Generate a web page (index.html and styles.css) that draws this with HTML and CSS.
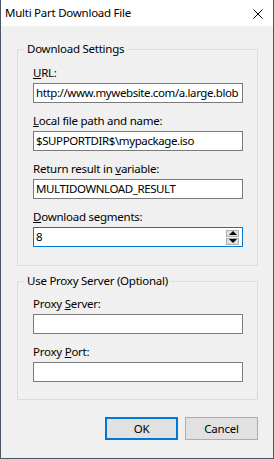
FILE: index.html
```html
<!DOCTYPE html>
<html lang="en">
	<head>
		<meta charset="UTF-8" />
		<title>Multi Part Download File</title>
		<link rel="stylesheet" href="styles.css">
	</head>
	<body>
		<div class="window">
			<div class="titlebar">
				<span class="title">Multi Part Download File</span>
				<svg class="close" width="10" height="10" viewBox="0 0 10 10">
					<path d="M0.5 0.5 L9.5 9.5 M9.5 0.5 L0.5 9.5" stroke="#000" stroke-width="1" fill="none" />
				</svg>
			</div>
			<div class="content">
				<fieldset class="group">
					<legend>Download Settings</legend>
					<div class="field">
						<label class="field-label"><u>U</u>RL:</label>
						<div class="textbox">http://www.mywebsite.com/a.large.blob</div>
					</div>
					<div class="field">
						<label class="field-label"><u>L</u>ocal file path and name:</label>
						<div class="textbox">$SUPPORTDIR$\mypackage.iso</div>
					</div>
					<div class="field">
						<label class="field-label">Return result in <u>v</u>ariable:</label>
						<div class="textbox">MULTIDOWNLOAD_RESULT</div>
					</div>
					<div class="field">
						<label class="field-label"><u>D</u>ownload segments:</label>
						<div class="textbox spinbox focused">
							<span class="spin-value">8</span>
							<div class="spin-buttons">
								<div class="spin-btn up"><span class="arrow-up"></span></div>
								<div class="spin-btn down"><span class="arrow-down"></span></div>
							</div>
						</div>
					</div>
				</fieldset>
				<fieldset class="group proxy">
					<legend>Use Proxy Server (Optional)</legend>
					<div class="field">
						<label class="field-label">Proxy <u>S</u>erver:</label>
						<div class="textbox"></div>
					</div>
					<div class="field">
						<label class="field-label">Proxy <u>P</u>ort:</label>
						<div class="textbox"></div>
					</div>
				</fieldset>
				<div class="buttons">
					<button class="btn default">OK</button>
					<button class="btn">Cancel</button>
				</div>
			</div>
		</div>
	</body>
</html>
```

FILE: styles.css
```css
* {
	margin: 0;
	padding: 0;
	box-sizing: border-box;
	font-family: "Noto Sans", sans-serif;
	font-size: 11.5px;
	letter-spacing: -0.25px;
}

body {
	background-color: #f0f0f0;
	width: 274px;
	height: 459px;
	overflow: hidden;
}

.window {
	width: 274px;
	height: 459px;
	background-color: #f0f0f0;
	border: 1px solid #4a5663;
	border-top: none;
	display: flex;
	flex-direction: column;
}

.titlebar {
	height: 26px;
	background: white;
	display: flex;
	align-items: center;
	justify-content: space-between;
	padding: 0 10px 0 4px;
}

.title {
	line-height: 16px;
	color: #000;
	margin-top: -1px;
}

.close {
	display: block;
	margin-top: 1px;
}

.content {
	padding: 15px 15px 0 16px;
	display: flex;
	flex-direction: column;
}

.group {
	border: 1px solid #dcdcdc;
	padding: 8px 13px 18px 15px;
	min-width: 0;
}

.group.proxy {
	margin-top: 7px;
	padding-top: 7px;
	padding-bottom: 17px;
}

legend {
	line-height: 16px;
	color: #000;
	padding: 0 3px;
	margin-left: -9px;
}

.field {
	display: flex;
	flex-direction: column;
}

.field + .field {
	margin-top: 10px;
}

.field-label {
	line-height: 16px;
	color: #000;
	margin-bottom: 2px;
}

.textbox {
	width: 210px;
	height: 20px;
	background: white;
	border: 1px solid #7a7a7a;
	line-height: 18px;
	padding: 0 2px;
	color: #000;
	letter-spacing: -0.4px;
	white-space: nowrap;
	overflow: hidden;
}

.spinbox {
	display: flex;
	align-items: center;
	justify-content: space-between;
	padding-right: 3px;
}

.focused {
	border-color: #0078d7;
}

.spin-buttons {
	display: flex;
	flex-direction: column;
	gap: 1px;
}

.spin-btn {
	width: 13px;
	height: 7px;
	background: #e1e1e1;
	border: 1px solid #adadad;
	display: flex;
	align-items: center;
	justify-content: center;
}

.arrow-up {
	width: 0;
	height: 0;
	border-left: 4px solid transparent;
	border-right: 4px solid transparent;
	border-bottom: 4px solid #000;
}

.arrow-down {
	width: 0;
	height: 0;
	border-left: 4px solid transparent;
	border-right: 4px solid transparent;
	border-top: 4px solid #000;
}

.buttons {
	display: flex;
	justify-content: flex-end;
	gap: 7px;
	margin-top: 17px;
}

.btn {
	width: 73px;
	height: 23px;
	background: #e1e1e1;
	border: 1px solid #adadad;
	color: #000;
}

.btn.default {
	border: 2px solid #0078d7;
}
```
